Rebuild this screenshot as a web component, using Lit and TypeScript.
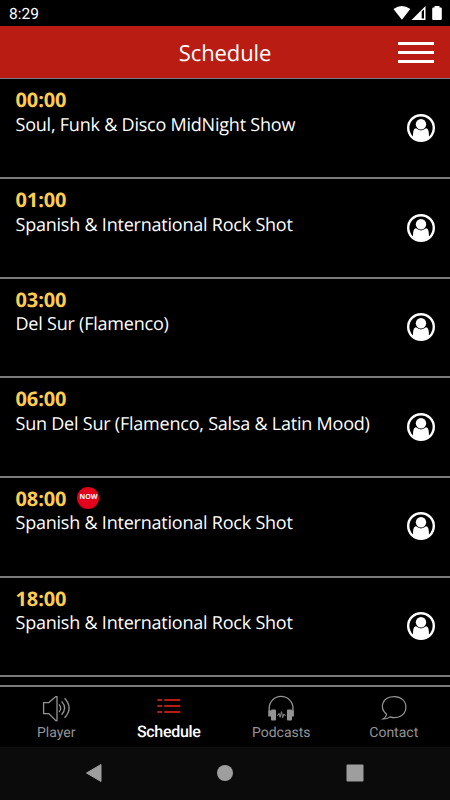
import { LitElement, html, css, svg, nothing } from "lit";
import { customElement } from "lit/decorators.js";
import { classMap } from "lit/directives/class-map.js";

interface Show { time: string; title: string; now?: boolean }

const SHOWS: Show[] = [
  { time: "00:00", title: "Soul, Funk & Disco MidNight Show" },
  { time: "01:00", title: "Spanish & International Rock Shot" },
  { time: "03:00", title: "Del Sur (Flamenco)" },
  { time: "06:00", title: "Sun Del Sur (Flamenco, Salsa & Latin Mood)" },
  { time: "08:00", title: "Spanish & International Rock Shot", now: true },
  { time: "18:00", title: "Spanish & International Rock Shot" },
];

const TABS = [
  {
    label: "Player",
    icon: svg`<g fill="none" stroke="currentColor" stroke-width="1.3">
      <path d="M1.6 7.6H6.8L13.8 1.6H15V25.6H13.8L6.8 18.6H1.6Z"/>
      <path d="M17 9.4q3.4 3.9 0 7.6M19.6 6.4q6 6.7 0 13.4M22.6 3.2q9 9.8 0 19.6"/></g>`,
  },
  {
    label: "Schedule",
    active: true,
    icon: svg`<path fill="#b91c12" d="M2.3 4H7V6H2.3ZM9.3 4H25.3V6H9.3ZM2.3 10H7V12H2.3ZM9.3 10H25.3V12H9.3ZM2.3 16H7V18H2.3ZM9.3 16H25.3V18H9.3Z"/>`,
  },
  {
    label: "Podcasts",
    icon: svg`<path d="M2.2 21V13.3a11.9 11.9 0 0 1 23.8 0V21" fill="none" stroke="currentColor" stroke-width="1.3"/>
      <path fill="currentColor" d="M1.4 15.6H4V21.4H1.4ZM24.2 15.6H26.8V21.4H24.2Z"/>
      <rect x="4" y="14.4" width="5" height="11" rx="1" fill="currentColor"/>
      <rect x="20" y="14.4" width="5" height="11" rx="1" fill="currentColor"/>
      <path d="M10 20.3h1l1-2 1.1 4 1.4-5.6 1.2 6 1.2-3.8.8 1.4h1.1" fill="none" stroke="currentColor" stroke-width=".9"/>`,
  },
  {
    label: "Contact",
    icon: svg`<path d="M6.6 19.3C-1.2 12.4 2.4 1.7 14.3 1.7c6.8 0 11.6 4.3 11.6 10.3 0 8.2-8.3 12.5-16 9.9-2 1.6-4.2 2.2-7 2.1 2.3-1.3 3.4-2.8 3.7-4.7Z" fill="none" stroke="currentColor" stroke-width="1.2"/>`,
  },
];

@customElement("app-root")
export class AppRoot extends LitElement {
  static styles = css`
    :host {
      display: flex;
      flex-direction: column;
      width: 450px;
      height: 800px;
      overflow: hidden;
      background: #000;
      color: #fff;
      font-family: "Open Sans", "Noto Sans", sans-serif;
      text-rendering: geometricPrecision;
    }
    * { box-sizing: border-box; }
    svg { display: block; }
    .status {
      height: 26px;
      flex: none;
      display: flex;
      justify-content: space-between;
      padding: 0 7px 0 9px;
      font: 15.5px/28px Roboto, sans-serif;
    }
    .status svg { margin-top: 5px; }
    header {
      height: 53.4px;
      flex: none;
      display: grid;
      grid-template-columns: 52px 1fr 52px;
      align-items: center;
      background: #b91c12;
      border-bottom: 1px solid #777b79;
    }
    h1 {
      grid-column: 2;
      margin: 1px 0 0;
      text-align: center;
      font-size: 22px;
      letter-spacing: -0.1px;
      font-weight: 400;
      line-height: 30px;
    }
    .burger { display: grid; gap: 6px; width: 36px; }
    .burger i { height: 3px; background: #fff; }
    .list { height: 605.6px; flex: none; overflow: hidden; }
    .show {
      height: 99.64px;
      display: flex;
      justify-content: space-between;
      padding: 8.1px 15px 0 15.5px;
      border-bottom: 2px solid #7b7b7b;
    }
    .time {
      display: flex;
      align-items: center;
      gap: 11px;
      height: 25.5px;
      color: #ffcc4d;
      font-size: 20px;
      font-weight: 700;
      line-height: 25.5px;
      letter-spacing: -0.1px;
    }
    .title { font-size: 18px; letter-spacing: -0.22px; line-height: 24px; white-space: nowrap; }
    .now {
      width: 22px;
      height: 22px;
      margin-top: -2px;
      border-radius: 50%;
      background: #e2001a;
      color: #fff;
      font-size: 7px;
      line-height: 22px;
      text-align: center;
    }
    .host { margin-top: 26.4px; flex: none; }
    nav {
      height: 62px;
      flex: none;
      display: grid;
      grid-template-columns: repeat(4, 1fr);
      border-top: 2px solid #7b7b7b;
    }
    .tab {
      display: flex;
      flex-direction: column;
      align-items: center;
      padding-top: 8px;
      color: #949494;
      font: 14px/18px Roboto, sans-serif;
    }
    .tab span { margin-top: 2px; }
    .tab.active span { margin-top: 1px; }
    .active { color: #fff; font-size: 16px; font-weight: 500; letter-spacing: -0.3px; }
    .system {
      flex: 1;
      display: flex;
      justify-content: space-between;
      align-items: center;
      padding: 0 85px 0 84px;
      background: #0b0b0b;
    }
  `;

  private row(s: Show) {
    return html`<div class="show">
      <div>
        <div class="time">${s.time}${s.now ? html`<span class="now">NOW</span>` : nothing}</div>
        <div class="title">${s.title}</div>
      </div>
      <svg class="host" width="28" height="28" viewBox="0 0 28 28">
        <circle cx="14" cy="14" r="12.8" fill="none" stroke="#fff" stroke-width="2.4"/>
        <path fill="#fff" d="M6 23.6C6 17.8 6.5 14.3 9 14.3Q14 18.6 19 14.3C21.5 14.3 22 17.8 22 23.6Q14 29 6 23.6Z"/>
        <circle cx="14" cy="10.3" r="5.2" fill="#fff"/>
      </svg>
    </div>`;
  }

  render() {
    return html`
      <div class="status">
        <span>8:29</span>
        <svg width="50" height="16" viewBox="0 0 50 16" fill="#fff">
          <path d="M.5 4Q8.9-2.2 17.3 4L8.9 14.8Z"/>
          <path fill-rule="evenodd" d="M18.5 15L32.5 1V15ZM28.7 6.5V13.5H31V4.5Z"/>
          <path d="M41.5 1h5v1.5h1.3q1 0 1 1V14q0 1-1 1h-7.6q-1 0-1-1V3.5q0-1 1-1h1.3Z"/>
        </svg>
      </div>
      <header><h1>Schedule</h1><div class="burger"><i></i><i></i><i></i></div></header>
      <div class="list">${SHOWS.map((s) => this.row(s))}</div>
      <nav>
        ${TABS.map((t) => html`<div class=${classMap({ tab: true, active: !!t.active })}>
          <svg width="28" height="27" viewBox="0 0 28 27">${t.icon}</svg>
          <span>${t.label}</span>
        </div>`)}
      </nav>
      <div class="system">
        <svg width="20" height="20" viewBox="0 0 20 20"><path d="M2.5 10L17 1.5V18.5Z" fill="#9e9e9e" stroke="#9e9e9e" stroke-linejoin="round"/></svg>
        <svg width="20" height="20" viewBox="0 0 20 20"><circle cx="10" cy="10" r="8" fill="#9e9e9e"/></svg>
        <svg width="20" height="20" viewBox="0 0 20 20"><rect x="1.5" y="1.5" width="17" height="17" rx="1" fill="#9e9e9e"/></svg>
      </div>`;
  }
}
